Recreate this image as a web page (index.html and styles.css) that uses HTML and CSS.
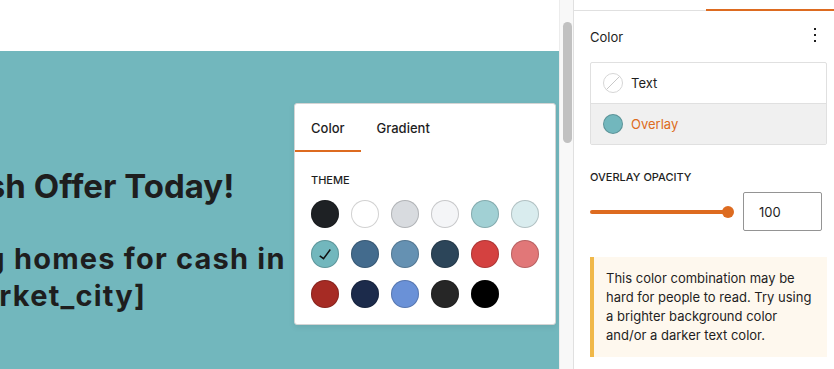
FILE: index.html
```html
<!DOCTYPE html>
<html lang="en">
<head>
<meta charset="utf-8">
<title>Cover block – color settings</title>
<link rel="stylesheet" href="styles.css">
</head>
<body>
<div class="app">
  <main class="editor">
    <div class="editor-top"></div>
    <section class="canvas">
      <div class="hero">
        <h1 class="hero-title">Get a Cash Offer Today!</h1>
        <h2 class="hero-sub"><span class="line line-a">We're buying homes for cash in</span><span class="line line-b">[market_city]</span></h2>
      </div>

      <div class="popover">
        <div class="pop-tabs">
          <button class="pop-tab is-active">Color</button>
          <button class="pop-tab">Gradient</button>
        </div>
        <div class="pop-body">
          <div class="pop-heading">THEME</div>
          <div class="swatches">
            <span class="sw" style="background:#1e2124"></span>
            <span class="sw" style="background:#ffffff"></span>
            <span class="sw" style="background:#d8dbdf"></span>
            <span class="sw" style="background:#f4f5f7"></span>
            <span class="sw" style="background:#a1d0d4"></span>
            <span class="sw" style="background:#d9ecee"></span>
            <span class="sw is-selected" style="background:#72b7bd"><svg viewBox="0 0 24 24" width="24" height="24"><path d="M16.7 7.1l-6.3 8.5-3.2-2.4-.9 1.2 4.4 3.3 7.2-9.7z" fill="#111"/></svg></span>
            <span class="sw" style="background:#436b8d"></span>
            <span class="sw" style="background:#6591b2"></span>
            <span class="sw" style="background:#2c4559"></span>
            <span class="sw" style="background:#d44140"></span>
            <span class="sw" style="background:#e17778"></span>
            <span class="sw" style="background:#a62b24"></span>
            <span class="sw" style="background:#1c2b4b"></span>
            <span class="sw" style="background:#6a91d7"></span>
            <span class="sw" style="background:#262626"></span>
            <span class="sw" style="background:#000000"></span>
          </div>
        </div>
      </div>
    </section>
  </main>

  <div class="scroll-track"><div class="scroll-thumb"></div></div>

  <aside class="sidebar">
    <div class="side-tabs">
      <div class="side-tab"></div>
      <div class="side-tab is-active"></div>
    </div>
    <div class="panel">
      <div class="panel-head">
        <span class="panel-title">Color</span>
        <svg class="kebab" viewBox="0 0 24 24" width="24" height="24"><path d="M13 19h-2v-2h2v2zm0-6h-2v-2h2v2zm0-6h-2V5h2v2z" fill="#1e1e1e"/></svg>
      </div>
      <div class="color-list">
        <div class="color-item">
          <svg class="indicator" viewBox="0 0 20 20" width="20" height="20"><circle cx="10" cy="10" r="9.5" fill="#fff" stroke="#d6d6d6"/><line x1="3.5" y1="16.5" x2="16.5" y2="3.5" stroke="#c8c8c8" stroke-width="1"/></svg>
          <span>Text</span>
        </div>
        <div class="color-item is-active">
          <span class="indicator dot"></span>
          <span>Overlay</span>
        </div>
      </div>

      <div class="opacity-label">OVERLAY OPACITY</div>
      <div class="opacity-row">
        <div class="range">
          <div class="range-track"></div>
          <div class="range-thumb"></div>
        </div>
        <div class="num-input">100</div>
      </div>

      <div class="notice">This color combination may be<br>hard for people to read. Try using<br>a brighter background color<br>and/or a darker text color.</div>
    </div>
  </aside>
</div>
</body>
</html>
```

FILE: styles.css
```css
* { box-sizing: border-box; }

html, body {
  margin: 0;
  padding: 0;
  width: 834px;
  height: 369px;
  overflow: hidden;
  background: #fff;
  font-family: Inter, "Noto Sans", sans-serif;
  color: #1e1e1e;
}

.app {
  display: flex;
  width: 834px;
  height: 369px;
}

.editor {
  width: 559px;
  flex: none;
  display: flex;
  flex-direction: column;
}

.editor-top {
  height: 51px;
  background: #fff;
  flex: none;
}

.canvas {
  flex: 1;
  background: #72b7bd;
  position: relative;
  overflow: hidden;
}

.hero {
  padding-top: 115px;
}

.hero-title {
  margin: 0 0 0 -148px;
  font-size: 33px;
  font-weight: 700;
  line-height: 40px;
  white-space: nowrap;
  color: #1e1e1e;
}

.hero-sub {
  margin: 34px 0 0 0;
  font-size: 29px;
  font-weight: 700;
  line-height: 37px;
  letter-spacing: 1.2px;
  color: #1e1e1e;
}

.line {
  display: block;
  white-space: nowrap;
}

.line-a { margin-left: -197px; }
.line-b { margin-left: -59px; }

/* popover */
.popover {
  position: absolute;
  left: 294px;
  top: 52px;
  width: 262px;
  background: #fff;
  border: 1px solid #d4d4d4;
  border-radius: 3px;
  box-shadow: 0 2px 6px rgba(0,0,0,.08);
}

.pop-tabs {
  display: flex;
  height: 48px;
}

.pop-tab {
  border: 0;
  background: none;
  font-family: inherit;
  font-size: 13px;
  font-weight: 500;
  color: #1e1e1e;
  padding: 0 16px;
  height: 48px;
  cursor: pointer;
}

.pop-tab.is-active {
  box-shadow: inset 0 -2px 0 #dd6b20;
}

.pop-body {
  padding: 20px 16px 16px;
}

.pop-heading {
  font-size: 11px;
  font-weight: 500;
  line-height: 16px;
  margin-bottom: 12px;
  color: #1e1e1e;
}

.swatches {
  display: grid;
  grid-template-columns: repeat(6, 28px);
  grid-auto-rows: 28px;
  gap: 12px;
}

.sw {
  width: 28px;
  height: 28px;
  border-radius: 50%;
  box-shadow: inset 0 0 0 1px rgba(0,0,0,.18);
  display: flex;
  align-items: center;
  justify-content: center;
}

/* scrollbar */
.scroll-track {
  width: 14px;
  flex: none;
  background: #f8f8f8;
  border-left: 1px solid #ececec;
  padding: 22px 2px 0 3px;
}

.scroll-thumb {
  width: 9px;
  height: 121px;
  border-radius: 5px;
  background: #c1c1c1;
}

/* sidebar */
.sidebar {
  flex: 1;
  border-left: 1px solid #e0e0e0;
  font-size: 13px;
}

.side-tabs {
  display: flex;
  height: 11px;
}

.side-tab {
  width: 132px;
  border-bottom: 1px solid #e0e0e0;
}

.side-tab.is-active {
  flex: 1;
  border-bottom: 2px solid #dd6b20;
}

.panel {
  padding: 12px 11px 0 16px;
}

.panel-head {
  display: flex;
  justify-content: space-between;
  height: 24px;
  margin-bottom: 15px;
}

.panel-title {
  font-size: 13px;
  line-height: 24px;
  padding-top: 2px;
}

.color-list {
  border: 1px solid #e0e0e0;
  border-radius: 2px;
}

.color-item {
  height: 40px;
  display: flex;
  align-items: center;
  gap: 8px;
  padding-left: 12px;
  font-size: 13px;
}

.color-item + .color-item {
  border-top: 1px solid #e0e0e0;
}

.color-item.is-active {
  background: #f0f0f0;
  color: #dd6b20;
  height: 41px;
}

.indicator {
  width: 20px;
  height: 20px;
  flex: none;
}

.indicator.dot {
  border-radius: 50%;
  background: #72b7bd;
  box-shadow: inset 0 0 0 1px rgba(0,0,0,.2);
}

.opacity-label {
  margin-top: 24px;
  font-size: 11px;
  font-weight: 500;
  line-height: 16px;
  margin-bottom: 7px;
}

.opacity-row {
  display: flex;
  align-items: center;
  height: 39px;
}

.range {
  width: 144px;
  height: 12px;
  position: relative;
  display: flex;
  align-items: center;
}

.range-track {
  width: 138px;
  height: 4px;
  border-radius: 2px;
  background: #dd6b20;
}

.range-thumb {
  position: absolute;
  left: 132px;
  top: 0;
  width: 12px;
  height: 12px;
  border-radius: 50%;
  background: #dd6b20;
}

.num-input {
  margin-left: 9px;
  width: 79px;
  height: 39px;
  border: 1px solid #949494;
  border-radius: 2px;
  padding-left: 15px;
  display: flex;
  align-items: center;
  font-size: 13px;
}

.notice {
  margin-top: 26px;
  background: #fef8ee;
  border-left: 4px solid #f0b849;
  padding: 12px 12px;
  font-size: 13px;
  line-height: 19px;
  color: #1e1e1e;
}
```
